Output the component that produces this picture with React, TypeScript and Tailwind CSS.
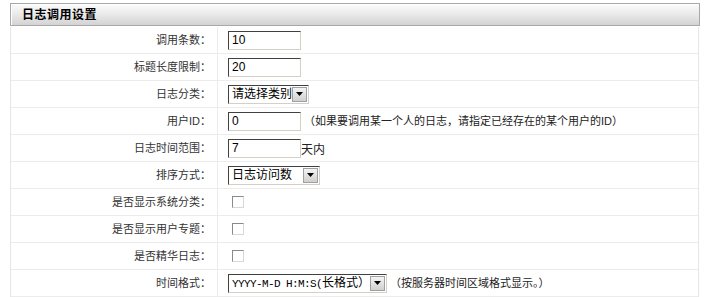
import React from "react";

const font = { fontFamily: '"Liberation Sans", "Noto Sans CJK SC", sans-serif' };

function TextBox({ value, w = "w-[73px]" }: { value: string; w?: string }) {
  return (
    <div
      className={`${w} h-[19px] flex items-center pl-[3px] bg-white border border-t-[#404040] border-l-[#404040] border-b-[#d4d0c8] border-r-[#d4d0c8] text-[12px] text-black`}
    >
      {value}
    </div>
  );
}

function Arrow() {
  return (
    <div className="w-[15px] h-[15px] shrink-0 flex items-center justify-center bg-gradient-to-b from-[#f4f4f4] to-[#cfcfcf] border border-[#a0a0a0]">
      <svg width="7" height="4" viewBox="0 0 7 4">
        <path d="M0 0h7L3.5 4z" fill="#000" />
      </svg>
    </div>
  );
}

function Select({ children, w }: { children: React.ReactNode; w: string }) {
  return (
    <div
      className={`${w} h-[19px] flex items-center justify-between bg-white border border-t-[#404040] border-l-[#404040] border-b-[#d4d0c8] border-r-[#d4d0c8] pl-[3px] pr-px`}
    >
      <span className="text-[12px] text-black whitespace-nowrap overflow-hidden">{children}</span>
      <Arrow />
    </div>
  );
}

function Check() {
  return <div className="ml-[4px] w-[12px] h-[12px] border border-[#8a8a8a] border-r-[#d8d8d8] border-b-[#d8d8d8] bg-white" />;
}

const note = "text-[11px] text-[#222] whitespace-nowrap";

const rows: { label: string; field: React.ReactNode }[] = [
  { label: "调用条数：", field: <TextBox value="10" /> },
  { label: "标题长度限制：", field: <TextBox value="20" /> },
  { label: "日志分类：", field: <Select w="w-[81px]">请选择类别</Select> },
  {
    label: "用户ID：",
    field: (
      <>
        <TextBox value="0" />
        <span className={`ml-[3px] ${note}`}>（如果要调用某一个人的日志，请指定已经存在的某个用户的ID）</span>
      </>
    ),
  },
  {
    label: "日志时间范围：",
    field: (
      <>
        <TextBox value="7" />
        <span className="text-[12px] text-[#222] mt-[4px]">天内</span>
      </>
    ),
  },
  { label: "排序方式：", field: <Select w="w-[92px]">日志访问数</Select> },
  { label: "是否显示系统分类：", field: <Check /> },
  { label: "是否显示用户专题：", field: <Check /> },
  { label: "是否精华日志：", field: <Check /> },
  {
    label: "时间格式：",
    field: (
      <>
        <Select w="w-[159px]">
          <span className="text-[11px] tracking-[-0.6px] font-['Liberation_Mono',monospace]">YYYY-M-D H:M:S(</span>
          <span className="text-[12px]">长格式）</span>
        </Select>
        <span className={`ml-[3px] ${note}`}>（按服务器时间区域格式显示。）</span>
      </>
    ),
  },
];

export default function App() {
  return (
    <div className="w-[708px] h-[297px] bg-white overflow-hidden pt-[3px] pl-[10px]" style={font}>
      <div className="w-[690px] h-[23px] border border-[#a8a8a8] bg-gradient-to-b from-[#fbfbfb] via-[#e9e9e9] to-[#d3d3d3] flex items-center pl-[11px] shadow-[inset_1px_1px_0_#fff]">
        <span className="text-[12px] font-bold text-black tracking-[0.5px]">日志调用设置</span>
      </div>
      <div className="w-[689px] mt-px border-x border-[#e6e6e6] bg-white">
        {rows.map((r, i) => (
          <div key={i} className="flex h-[27px] border-b border-[#ececec]">
            <div className="w-[207px] flex items-center justify-end pr-[6px] text-[11px] text-[#333] border-r border-[#ececec]">
              {r.label}
            </div>
            <div className="flex-1 flex items-center pl-[10px]">{r.field}</div>
          </div>
        ))}
      </div>
    </div>
  );
}
